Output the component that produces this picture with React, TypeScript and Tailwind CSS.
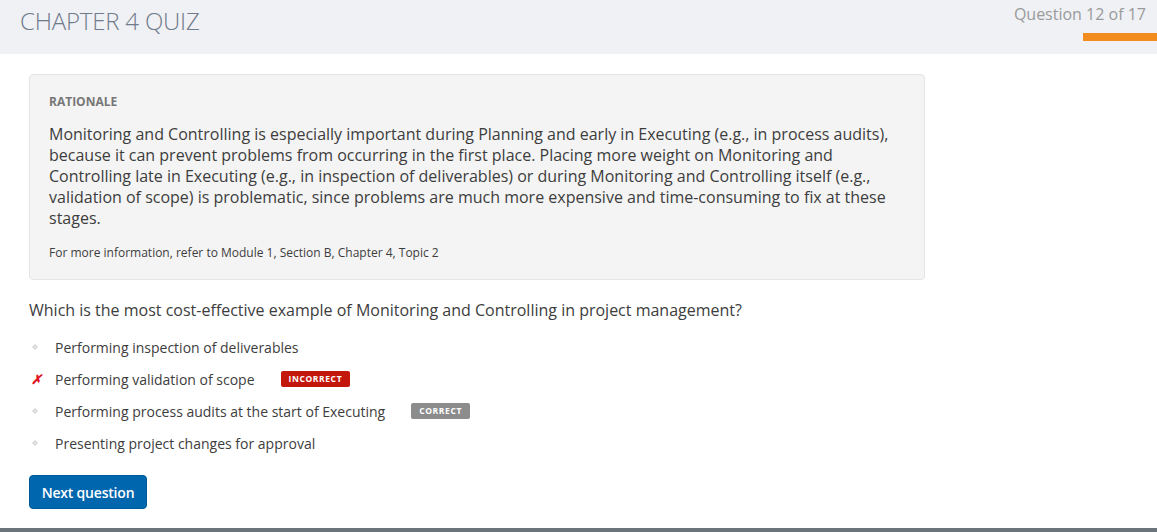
import React from 'react';

const options = [
  { text: 'Performing inspection of deliverables', mark: 'dot' },
  { text: 'Performing validation of scope', mark: 'x', badge: 'INCORRECT' },
  { text: 'Performing process audits at the start of Executing', mark: 'dot', badge: 'CORRECT' },
  { text: 'Presenting project changes for approval', mark: 'dot' },
];

function Bullet({ mark }: { mark: string }) {
  if (mark === 'x') {
    return <span className="w-[26px] text-[13px] leading-none text-[#e0141e] font-bold italic pl-[2px]">✗</span>;
  }
  return (
    <span className="w-[26px] flex items-center pl-[4px]">
      <span className="w-[4px] h-[4px] rotate-45 border border-[#cfcfcf] bg-[#ececec]"></span>
    </span>
  );
}

export default function App() {
  return (
    <div className="min-h-[532px] flex flex-col bg-white text-[#3d3d3d]" style={{ fontFamily: '"Open Sans", sans-serif' }}>
      {/* Header */}
      <div className="h-[54px] bg-[#eff1f5] flex justify-between">
        <h1 className="pl-[20px] pt-[3px] text-[24px] font-light text-[#6f7a8a] tracking-[-0.2px]">CHAPTER 4 QUIZ</h1>
        <div className="flex flex-col items-end">
          <span className="pt-[2px] pr-[11px] text-[16px] text-[#9a9a9a]">Question 12 of 17</span>
          <span className="mt-[7px] w-[74px] h-[8px] bg-[#f28c1e]"></span>
        </div>
      </div>

      <div className="flex-1 px-[29px] pt-[20px]">
        {/* Rationale */}
        <div className="w-[896px] bg-[#f4f4f4] border border-[#e4e4e4] rounded-[4px] pl-[19px] pr-[20px] pt-[18px] pb-[17px]">
          <p className="text-[12px] font-bold text-[#777] leading-[18px]">RATIONALE</p>
          <p className="mt-[13px] text-[16px] leading-[21px] text-[#3d3d3d]">
            Monitoring and Controlling is especially important during Planning and early in Executing (e.g., in process audits),
            because it can prevent problems from occurring in the first place. Placing more weight on Monitoring and
            Controlling late in Executing (e.g., in inspection of deliverables) or during Monitoring and Controlling itself (e.g.,
            validation of scope) is problematic, since problems are much more expensive and time-consuming to fix at these
            stages.
          </p>
          <p className="mt-[15px] text-[12px] leading-[18px] text-[#3d3d3d]">For more information, refer to Module 1, Section B, Chapter 4, Topic 2</p>
        </div>

        {/* Question */}
        <p className="mt-[19px] text-[16px] leading-[22px]">Which is the most cost-effective example of Monitoring and Controlling in project management?</p>

        <ul className="mt-[10px] flex flex-col">
          {options.map((o, i) => (
            <li key={i} className="h-[32px] flex items-center text-[14px]">
              <Bullet mark={o.mark} />
              <span>{o.text}</span>
              {o.badge && (
                <span
                  className={`ml-[26px] h-[16px] px-[8px] flex items-center rounded-[2px] text-[8.5px] font-bold tracking-[0.6px] text-white ${
                    o.badge === 'INCORRECT' ? 'bg-[#c4170c]' : 'bg-[#8c8c8c]'
                  }`}
                >
                  {o.badge}
                </span>
              )}
            </li>
          ))}
        </ul>

        <button className="mt-[16px] h-[34px] w-[118px] rounded-[4px] bg-[#0066ad] border border-[#005a99] text-white text-[14px] font-semibold tracking-[-0.2px]">
          Next question
        </button>
      </div>

      <div className="h-[4px] bg-[#6b747b]"></div>
    </div>
  );
}
